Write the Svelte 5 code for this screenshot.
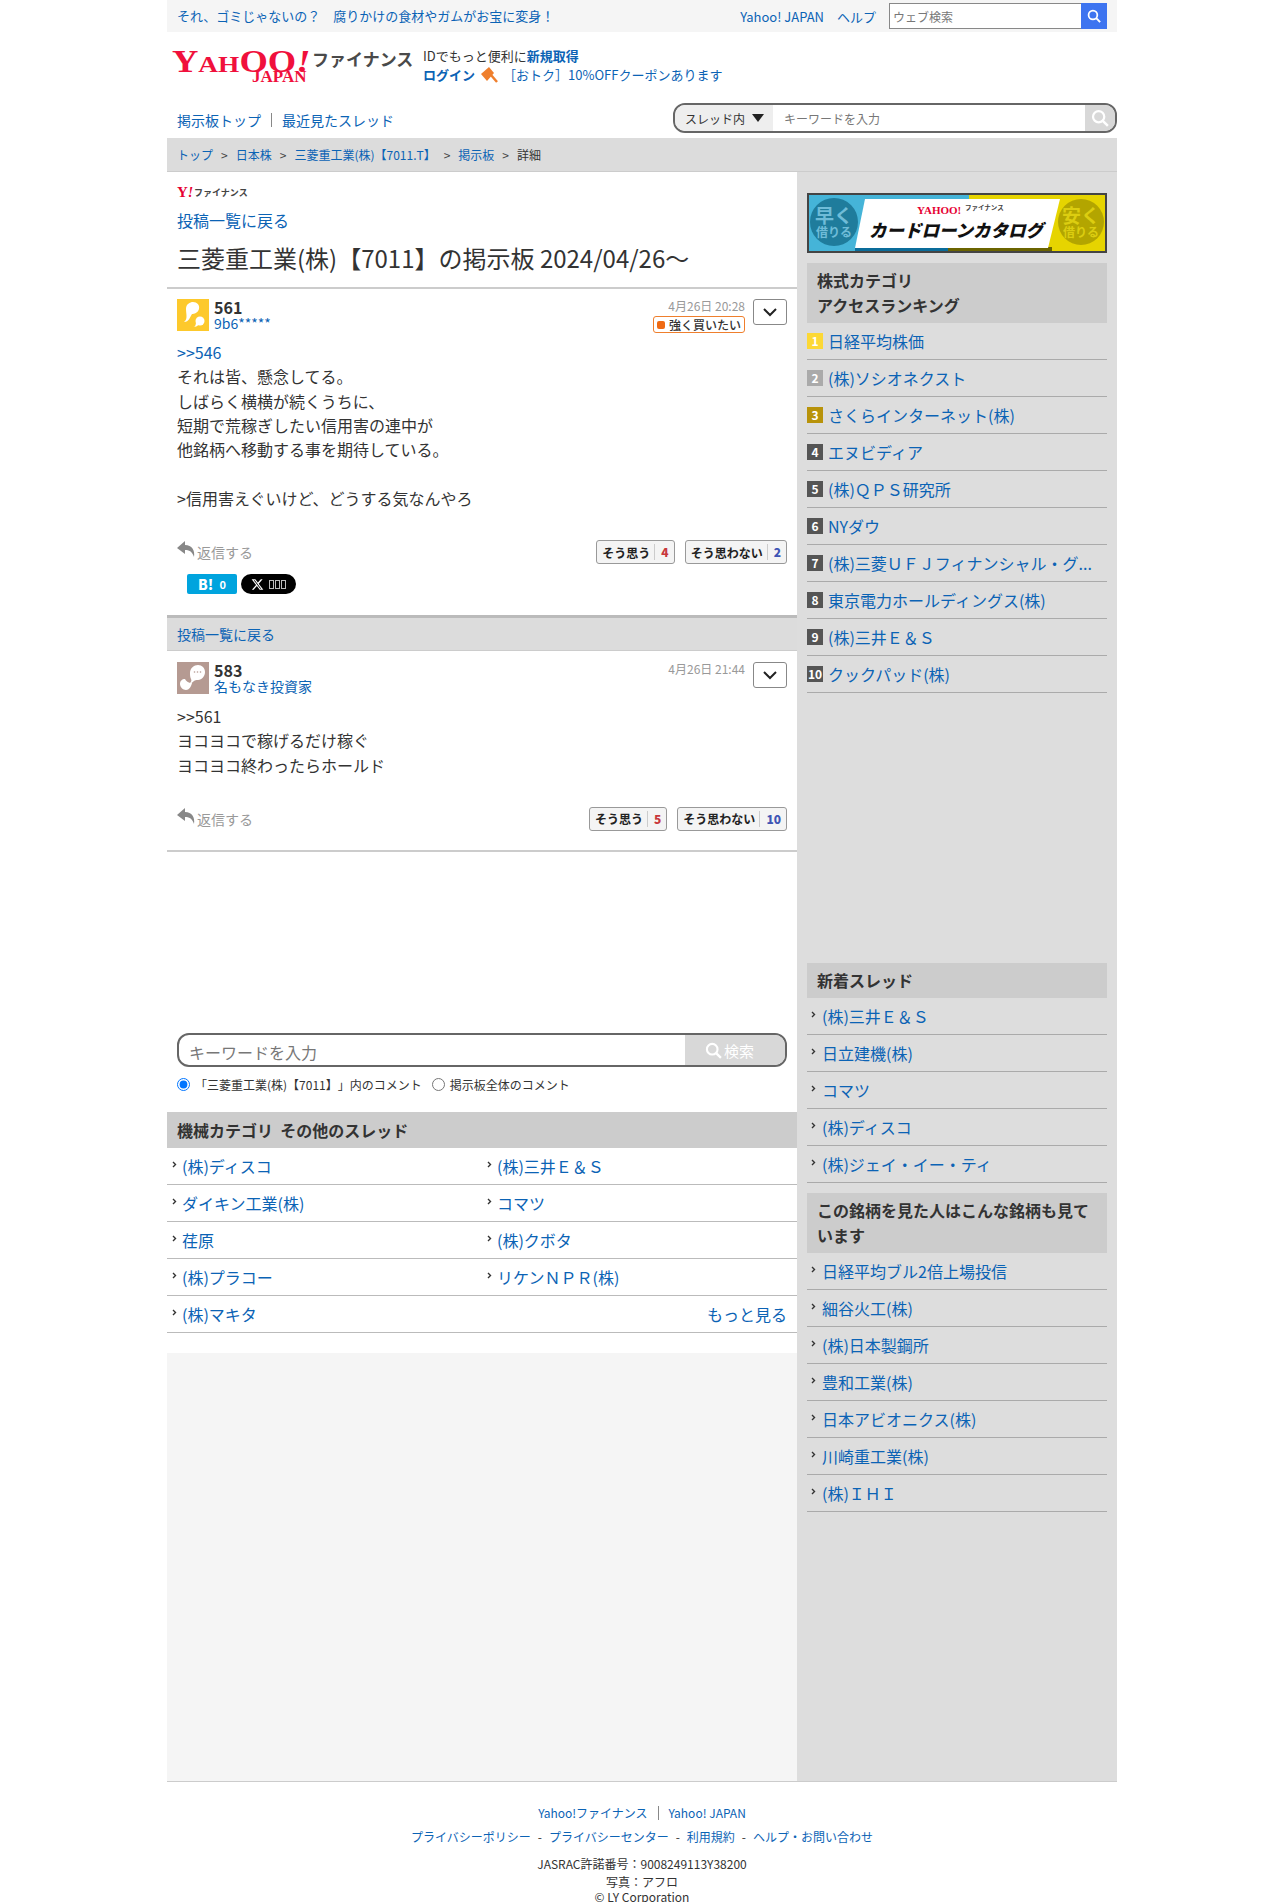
<script lang="ts">
    const ranking = ['日経平均株価', '(株)ソシオネクスト', 'さくらインターネット(株)', 'エヌビディア', '(株)ＱＰＳ研究所', 'NYダウ', '(株)三菱ＵＦＪフィナンシャル・グ...', '東京電力ホールディングス(株)', '(株)三井Ｅ＆Ｓ', 'クックパッド(株)'];
    const newest = ['(株)三井Ｅ＆Ｓ', '日立建機(株)', 'コマツ', '(株)ディスコ', '(株)ジェイ・イー・ティ'];
    const alsoViewed = ['日経平均ブル2倍上場投信', '細谷火工(株)', '(株)日本製鋼所', '豊和工業(株)', '日本アビオニクス(株)', '川崎重工業(株)', '(株)ＩＨＩ'];
    const others = ['(株)ディスコ', '(株)三井Ｅ＆Ｓ', 'ダイキン工業(株)', 'コマツ', '荏原', '(株)クボタ', '(株)プラコー', 'リケンＮＰＲ(株)', '(株)マキタ'];
    const rankClass = (i: number) => (i < 3 ? `r${i + 1}` : '');
</script>

{#snippet chev()}
    <svg class="chev" width="5" height="7" viewBox="0 0 5 7"><path d="M1 1l2.500 2.500L1 6" fill="none" stroke="#333" stroke-width="1.400" /></svg>
{/snippet}

{#snippet reply()}
    <svg width="20" height="20" viewBox="0 0 20 20"><path d="M8 1L0 8l8 6v-4c4 0 7 1 9 7 1-7-2-12-9-12z" fill="#888" /></svg>
{/snippet}

{#snippet searchIcon(color: string, size: number)}
    <svg width={size} height={size} viewBox="0 0 16 16"><circle cx="6.800" cy="6.800" r="5" fill="none" stroke={color} stroke-width="2" /><path d="M10.500 10.500L15 15" stroke={color} stroke-width="2.200" /></svg>
{/snippet}

{#snippet downBtn()}
    <button class="more" aria-label="メニュー"><svg width="14" height="9" viewBox="0 0 14 9"><path d="M1 1l6 6 6-6" fill="none" stroke="#222" stroke-width="2" /></svg></button>
{/snippet}

<div class="page">
    <div class="topbar">
        <a class="promo" href="#a">それ、ゴミじゃないの？　腐りかけの食材やガムがお宝に変身！</a>
        <div class="topright">
            <a href="#a">Yahoo! JAPAN</a>
            <a href="#a">ヘルプ</a>
            <div class="websearch">
                <span>ウェブ検索</span>
                <b>{@render searchIcon('#fff', 14)}</b>
            </div>
        </div>
    </div>

    <header class="head">
        <div class="logo">
            <span class="yahoo"><i>Y</i>AH<i>OO</i><em>!</em></span>
            <span class="japan">JAPAN</span>
            <span class="fin">ファイナンス</span>
        </div>
        <div class="login">
            <div>IDでもっと便利に<a href="#a"><strong>新規取得</strong></a></div>
            <div class="coupon">
                <a href="#a"><strong>ログイン</strong></a>
                <svg width="18" height="18" viewBox="0 0 18 18"><path d="M1 8l8-7 5 6-7 8z" fill="#ef7f2d" /><path d="M11 9l6 7" stroke="#ef7f2d" stroke-width="2.500" /></svg>
                <a href="#a">［おトク］10%OFFクーポンあります</a>
            </div>
        </div>
    </header>

    <div class="nav">
        <div class="navlinks"><a href="#a">掲示板トップ</a><span class="sep"></span><a href="#a">最近見たスレッド</a></div>
        <div class="threadsearch">
            <div class="scope">スレッド内<span class="tri"></span></div>
            <span class="ph">キーワードを入力</span>
            <b>{@render searchIcon('#fff', 18)}</b>
        </div>
    </div>

    <div class="crumbs">
        <a href="#a">トップ</a><span>&gt;</span><a href="#a">日本株</a><span>&gt;</span><a href="#a">三菱重工業(株)【7011.T】</a><span>&gt;</span><a href="#a">掲示板</a><span>&gt;</span><em>詳細</em>
    </div>

    <div class="columns">
        <main class="main">
            <div class="mainhead">
                <div class="minilogo"><span class="y">Y<i>!</i></span><span>ファイナンス</span></div>
                <a class="back" href="#a">投稿一覧に戻る</a>
                <h1>三菱重工業(株)【7011】の掲示板 2024/04/26〜</h1>
            </div>

            <article class="post first">
                <div class="posthead">
                    <svg class="avatar" viewBox="0 0 32 32"><rect width="32" height="32" fill="#fdc92c" /><path d="M7 23c4-3 2-8 2-13 0-5 4-7 7-7 4 0 7 3 6 7-1 4-5 5-7 5-2 3-3 8-8 8z" fill="#fff" /><circle cx="23" cy="22" r="4.500" fill="#fff" /><path d="M19 23c0 3-1 5-3 5 3 0 5-1 6-3z" fill="#fff" /></svg>
                    <div class="who"><strong>561</strong><a href="#a">9b6*****</a></div>
                    <div class="meta"><time>4月26日 20:28</time><span class="badge"><i></i>強く買いたい</span></div>
                    {@render downBtn()}
                </div>
                <div class="body">
                    <a href="#a">&gt;&gt;546</a><br />
                    それは皆、懸念してる。<br />
                    しばらく横横が続くうちに、<br />
                    短期で荒稼ぎしたい信用害の連中が<br />
                    他銘柄へ移動する事を期待している。<br />
                    <br />
                    &gt;信用害えぐいけど、どうする気なんやろ
                </div>
                <div class="actions">
                    <span class="reply">{@render reply()}返信する</span>
                    <div class="votes">
                        <span class="vote">そう思う<b class="red">4</b></span>
                        <span class="vote">そう思わない<b class="blue">2</b></span>
                    </div>
                </div>
                <div class="share">
                    <span class="hatena"><b>B!</b>0</span>
                    <span class="xbtn">
                        <svg width="13" height="13" viewBox="0 0 24 24"><path d="M18.200 2.200h3.300l-7.200 8.300 8.500 11.200h-6.700l-5.200-6.800-6 6.800H1.600l7.700-8.800L1.200 2.200h6.800l4.700 6.200zm-1.200 17.500h1.800L7 4.100H5.100z" fill="#fff" /></svg>
                        <i></i><i></i><i></i>
                    </span>
                </div>
            </article>

            <div class="backbar"><a href="#a">投稿一覧に戻る</a></div>

            <article class="post second">
                <div class="posthead">
                    <svg class="avatar" viewBox="0 0 32 32"><rect width="32" height="32" fill="#b59a92" /><path d="M13 11c0-5 4-8 8-8s7 3 7 7-3 8-7 8c-2 0-3 0-4 1-2 2-4 3-5 3 2-2 3-3 2-5-1-2-1-4-1-6z" fill="#fff" /><path d="M8 17c1 2 3 4 7 4-1 4-3 7-6 7s-6-3-6-6 2-5 5-5z" fill="#fff" /><circle cx="17.500" cy="10" r=".8" fill="#b59a92" /><circle cx="20.500" cy="10" r=".8" fill="#b59a92" /><circle cx="23.500" cy="10" r=".8" fill="#b59a92" /></svg>
                    <div class="who"><strong>583</strong><a href="#a">名もなき投資家</a></div>
                    <div class="meta"><time>4月26日 21:44</time></div>
                    {@render downBtn()}
                </div>
                <div class="body">
                    &gt;&gt;561<br />
                    ヨコヨコで稼げるだけ稼ぐ<br />
                    ヨコヨコ終わったらホールド
                </div>
                <div class="actions">
                    <span class="reply">{@render reply()}返信する</span>
                    <div class="votes">
                        <span class="vote">そう思う<b class="red">5</b></span>
                        <span class="vote">そう思わない<b class="blue">10</b></span>
                    </div>
                </div>
            </article>

            <div class="commentsearch">
                <div class="bigsearch">
                    <span class="ph">キーワードを入力</span>
                    <b>{@render searchIcon('#fff', 17)}検索</b>
                </div>
                <div class="radios">
                    <label><input type="radio" name="scope" checked />「三菱重工業(株)【7011】」内のコメント</label>
                    <label><input type="radio" name="scope" />掲示板全体のコメント</label>
                </div>
            </div>

            <h2 class="mainsec">機械カテゴリ&nbsp;&nbsp;その他のスレッド</h2>
            <ul class="othergrid">
                {#each others as name}
                    <li>{@render chev()}<a href="#a">{name}</a></li>
                {/each}
                <li class="morecell"><a href="#a">もっと見る</a></li>
            </ul>
            <div class="adblock"></div>
        </main>

        <aside class="side">
            <svg class="banner" viewBox="0 0 300 60">
                <rect width="300" height="60" fill="#444" />
                <rect x="2" y="2" width="160" height="56" fill="#45b4d8" />
                <rect x="162" y="2" width="136" height="56" fill="#e6d400" />
                <rect x="48" y="54" width="93" height="4" fill="#0a6c9a" />
                <rect x="141" y="54" width="104" height="4" fill="#6b6400" />
                <circle cx="27" cy="29" r="24" fill="#1f7c9c" />
                <circle cx="274" cy="29" r="23" fill="#b3a500" />
                <polygon points="58,6 253,6 241,55 48,55" fill="#fff" />
                <text x="8" y="30" class="b1 cool">早く</text>
                <text x="9" y="44" class="b2 cool">借りる</text>
                <text x="255" y="30" class="b1 warm">安く</text>
                <text x="256" y="44" class="b2 warm">借りる</text>
                <text x="110" y="21" class="b3">YAHOO!</text>
                <text x="158" y="17" class="b4">ファイナンス</text>
                <text x="62" y="44" class="b5">カードローンカタログ</text>
            </svg>

            <h2 class="sidesec">株式カテゴリ<br />アクセスランキング</h2>
            <ol class="list">
                {#each ranking as name, i}
                    <li class="rank"><span class="num {rankClass(i)}">{i + 1}</span><a href="#a">{name}</a></li>
                {/each}
            </ol>

            <div class="sidead"></div>

            <h2 class="sidesec">新着スレッド</h2>
            <ul class="list">
                {#each newest as name}
                    <li class="plain">{@render chev()}<a href="#a">{name}</a></li>
                {/each}
            </ul>

            <h2 class="sidesec">この銘柄を見た人はこんな銘柄も見ています</h2>
            <ul class="list">
                {#each alsoViewed as name}
                    <li class="plain">{@render chev()}<a href="#a">{name}</a></li>
                {/each}
            </ul>
        </aside>
    </div>

    <footer class="foot">
        <div class="f1"><a href="#a">Yahoo!ファイナンス</a><span class="sep"></span><a href="#a">Yahoo! JAPAN</a></div>
        <div class="f2"><a href="#a">プライバシーポリシー</a><span>-</span><a href="#a">プライバシーセンター</a><span>-</span><a href="#a">利用規約</a><span>-</span><a href="#a">ヘルプ・お問い合わせ</a></div>
        <div class="f3">JASRAC許諾番号：9008249113Y38200</div>
        <div class="f4">写真：アフロ</div>
        <div class="f5">© LY Corporation</div>
    </footer>
</div>

<style>
    :global(body) {
        margin: 0;
        background: #fff;
        font-family: "Noto Sans CJK JP", "Noto Sans", sans-serif;
        color: #333;
    }
    a {
        color: #0b63b5;
        text-decoration: none;
    }
    ul, ol {
        list-style: none;
        margin: 0;
        padding: 0;
    }
    h1, h2 {
        margin: 0;
    }
    .page {
        width: 950px;
        margin-left: 167px;
        height: 1902px;
        overflow: hidden;
    }

    /* top */
    .topbar {
        height: 32px;
        background: #f5f5f5;
        display: flex;
        align-items: center;
        justify-content: space-between;
        padding: 0 10px;
        font-size: 13px;
    }
    .promo {
        margin-top: -2px;
    }
    .topright {
        display: flex;
        align-items: center;
        gap: 13px;
    }
    .websearch {
        width: 218px;
        height: 26px;
        display: flex;
        box-sizing: border-box;
        border: 1px solid #888;
        border-right: 0;
        background: #fff;
        font-size: 12px;
        color: #777;
        align-items: center;
        padding-left: 3px;
        justify-content: space-between;
    }
    .websearch b {
        width: 26px;
        height: 26px;
        background: #3d74f0;
        display: flex;
        align-items: center;
        justify-content: center;
    }

    .head {
        display: flex;
        height: 71px;
        padding: 15px 0 0 5px;
        box-sizing: border-box;
    }
    .logo {
        width: 251px;
        position: relative;
        height: 36px;
        flex: none;
    }
    .yahoo {
        position: absolute;
        left: 0;
        top: -3px;
        font-family: "Liberation Serif", serif;
        font-weight: 700;
        color: #f0103c;
        font-size: 24px;
        line-height: 34px;
        white-space: nowrap;
        transform: scaleX(1.14);
        transform-origin: left;
    }
    .yahoo i {
        font-style: normal;
        font-size: 32px;
    }
    .yahoo em {
        font-size: 32px;
        font-style: italic;
    }
    .japan {
        position: absolute;
        left: 80px;
        top: 23px;
        font-family: "Liberation Serif", serif;
        font-weight: 700;
        font-size: 17px;
        color: #f0103c;
        line-height: 14px;
    }
    .fin {
        position: absolute;
        left: 140px;
        top: -2px;
        font-size: 17px;
        font-weight: 700;
        color: #4a4a4a;
        line-height: 28px;
        white-space: nowrap;
    }
    .login {
        font-size: 13px;
        line-height: 19px;
        margin-top: -1px;
    }
    .coupon {
        display: flex;
        align-items: center;
        gap: 5px;
    }

    .nav {
        display: flex;
        justify-content: space-between;
        height: 35px;
        padding-left: 10px;
        align-items: flex-start;
    }
    .navlinks {
        font-size: 14px;
        display: flex;
        align-items: center;
        padding-top: 7px;
        line-height: 20px;
    }
    .sep {
        display: inline-block;
        width: 1px;
        height: 14px;
        background: #888;
        margin: 0 10px;
    }
    .threadsearch {
        width: 444px;
        height: 30px;
        box-sizing: border-box;
        border: 2px solid #666;
        border-radius: 12px;
        display: flex;
        align-items: center;
        overflow: hidden;
        font-size: 12px;
    }
    .scope {
        width: 98px;
        height: 100%;
        background: #eee;
        display: flex;
        align-items: center;
        padding-left: 10px;
        box-sizing: border-box;
        gap: 7px;
        color: #333;
    }
    .tri {
        border-left: 6px solid transparent;
        border-right: 6px solid transparent;
        border-top: 8px solid #222;
    }
    .threadsearch .ph {
        margin-left: 11px;
        color: #777;
        flex: 1;
    }
    .threadsearch b {
        width: 30px;
        height: 100%;
        background: #d8d8d8;
        display: flex;
        align-items: center;
        justify-content: center;
    }

    .crumbs {
        height: 34px;
        box-sizing: border-box;
        background: #dcdcdc;
        border-bottom: 1px solid #ccc;
        display: flex;
        align-items: center;
        padding-left: 10px;
        font-size: 12px;
    }
    .crumbs span {
        margin: 0 8px;
        color: #444;
    }
    .crumbs em {
        font-style: normal;
        color: #333;
    }

    .columns {
        display: flex;
        height: 1609px;
        border-bottom: 1px solid #ccc;
    }
    .main {
        width: 630px;
        flex: none;
    }
    .side {
        width: 320px;
        flex: none;
        background: #ddd;
        padding: 21px 10px 0;
        box-sizing: border-box;
    }

    .mainhead {
        height: 117px;
        box-sizing: border-box;
        padding: 13px 10px 0;
        border-bottom: 2px solid #ccc;
    }
    .minilogo {
        display: flex;
        align-items: center;
        font-size: 9px;
        height: 14px;
        font-weight: 700;
        color: #444;
        gap: 2px;
    }
    .minilogo .y {
        font-family: "Liberation Serif", serif;
        font-size: 15px;
        color: #e60033;
        width: 15px;
        white-space: nowrap;
    }
    .minilogo .y i {
        font-size: 14px;
    }
    .back {
        display: block;
        font-size: 16px;
        line-height: 24px;
        margin-top: 9px;
    }
    h1 {
        font-size: 24px;
        font-weight: 400;
        line-height: 36px;
        margin-top: 8px;
        color: #333;
        white-space: nowrap;
    }

    .post {
        padding: 10px 10px 0;
        box-sizing: border-box;
    }
    .first {
        height: 326px;
    }
    .second {
        height: 201px;
        padding-top: 11px;
        border-bottom: 2px solid #ccc;
    }
    .second .posthead {
        height: 42px;
    }
    .posthead {
        display: flex;
        align-items: flex-start;
        height: 41px;
    }
    .avatar {
        width: 32px;
        height: 32px;
        flex: none;
    }
    .who {
        display: flex;
        flex-direction: column;
        margin-left: 5px;
        flex: 1;
        line-height: 16px;
    }
    .who strong {
        font-size: 16px;
        color: #333;
    }
    .who a {
        font-size: 14px;
    }
    .meta {
        display: flex;
        flex-direction: column;
        align-items: flex-end;
        margin-right: 8px;
    }
    .meta time {
        font-size: 12px;
        color: #999;
        line-height: 14px;
    }
    .badge {
        margin-top: 3px;
        height: 17px;
        width: 92px;
        box-sizing: border-box;
        border: 1px solid #ef7f2d;
        border-radius: 3px;
        font-size: 12px;
        font-weight: 500;
        line-height: 15px;
        display: flex;
        align-items: center;
        gap: 4px;
        padding-left: 3px;
    }
    .badge i {
        width: 8px;
        height: 8px;
        border-radius: 2px;
        background: #ef6a13;
    }
    .more {
        width: 34px;
        height: 26px;
        background: #fff;
        border: 1px solid #888;
        border-radius: 3px;
        padding: 0;
        display: flex;
        align-items: center;
        justify-content: center;
    }
    .body {
        font-size: 16px;
        line-height: 24.3px;
        color: #333;
    }
    .actions {
        display: flex;
        justify-content: space-between;
        margin-top: 30px;
        height: 34px;
    }
    .reply {
        display: flex;
        align-items: center;
        font-size: 14px;
        color: #999;
        height: 24px;
    }
    .reply svg {
        margin-top: -4px;
    }
    .votes {
        display: flex;
        gap: 10px;
    }
    .vote {
        display: flex;
        align-items: center;
        height: 24px;
        box-sizing: border-box;
        border: 1px solid #999;
        border-radius: 3px;
        background: #f4f4f4;
        padding: 0 5px;
        font-size: 12px;
        font-weight: 700;
        color: #222;
    }
    .vote b {
        margin-left: 4px;
        padding-left: 6px;
        border-left: 1px solid #ccc;
        line-height: 16px;
    }
    .red {
        color: #c8383c;
    }
    .blue {
        color: #3f55b5;
    }
    .share {
        display: flex;
        gap: 4px;
        margin-left: 10px;
    }
    .hatena {
        width: 50px;
        height: 20px;
        background: #00a4de;
        border-radius: 2px;
        color: #fff;
        font-size: 11px;
        font-weight: 700;
        display: flex;
        align-items: center;
        justify-content: center;
        gap: 6px;
    }
    .hatena b {
        font-size: 14px;
    }
    .xbtn {
        width: 55px;
        height: 20px;
        background: #000;
        border-radius: 10px;
        display: flex;
        align-items: center;
        justify-content: center;
        gap: 1px;
    }
    .xbtn svg {
        margin-right: 4px;
    }
    .xbtn i {
        width: 3px;
        height: 7px;
        border: 1px solid #bbb;
    }
    .backbar {
        height: 36px;
        box-sizing: border-box;
        background: #dcdcdc;
        border-top: 3px solid #bbb;
        border-bottom: 1px solid #ccc;
        padding-left: 10px;
        font-size: 14px;
        line-height: 32px;
    }

    .commentsearch {
        padding: 181px 10px 0;
    }
    .bigsearch {
        height: 34px;
        box-sizing: border-box;
        border: 2px solid #666;
        border-radius: 12px;
        display: flex;
        overflow: hidden;
        font-size: 16px;
        align-items: center;
    }
    .bigsearch .ph {
        flex: 1;
        padding: 3px 0 0 10px;
        color: #777;
    }
    .bigsearch b {
        width: 100px;
        height: 100%;
        background: #d8d8d8;
        color: #fff;
        font-weight: 400;
        font-size: 15px;
        display: flex;
        align-items: center;
        padding-left: 20px;
        box-sizing: border-box;
        gap: 2px;
    }
    .radios {
        display: flex;
        gap: 10px;
        margin-top: 7px;
        font-size: 12px;
        height: 20px;
        align-items: center;
        text-spacing-trim: space-all;
    }
    .radios label {
        display: flex;
        align-items: center;
    }
    .radios input {
        width: 13px;
        height: 13px;
        margin: 0 5px 0 0;
    }
    .mainsec {
        margin-top: 18px;
        height: 36px;
        background: #ccc;
        font-size: 16px;
        line-height: 36px;
        font-weight: 700;
        padding-left: 10px;
        color: #333;
    }
    .othergrid {
        display: grid;
        grid-template-columns: 1fr 1fr;
    }
    .othergrid li {
        height: 37px;
        box-sizing: border-box;
        border-bottom: 1px solid #bbb;
        display: flex;
        align-items: center;
        font-size: 16px;
        padding-left: 5px;
    }
    .othergrid .morecell {
        justify-content: flex-end;
        padding-right: 10px;
    }
    .chev {
        margin: -4px 5px 0 0;
        flex: none;
    }
    .adblock {
        margin-top: 20px;
        height: 428px;
        background: #f5f5f5;
    }

    .banner {
        display: block;
        width: 300px;
        height: 60px;
    }
    .b1 {
        font-size: 19px;
        font-weight: 700;
    }
    .b2 {
        font-size: 12px;
        font-weight: 700;
    }
    .cool {
        fill: #6fbcd8;
    }
    .warm {
        fill: #dccd10;
    }
    .b3 {
        font-family: "Liberation Serif", serif;
        font-weight: 700;
        font-size: 11px;
        fill: #e60033;
    }
    .b4 {
        font-size: 6.500px;
        font-weight: 700;
        fill: #444;
    }
    .b5 {
        font-size: 17.500px;
        font-weight: 900;
        font-style: italic;
        fill: #111;
    }
    .sidesec {
        margin-top: 10px;
        background: #ccc;
        font-size: 16px;
        line-height: 25px;
        font-weight: 700;
        padding: 5px 10px;
        color: #333;
    }
    .list li {
        height: 37px;
        box-sizing: border-box;
        border-bottom: 1px solid #aaa;
        display: flex;
        align-items: center;
        font-size: 16px;
        white-space: nowrap;
    }
    .plain {
        padding-left: 4px;
    }
    .plain .chev {
        margin-right: 6px;
    }
    .num {
        width: 16px;
        height: 16px;
        background: #555;
        color: #fff;
        font-size: 12px;
        font-weight: 700;
        line-height: 16px;
        text-align: center;
        margin-right: 5px;
        flex: none;
    }
    .r1 {
        background: #fcd835;
    }
    .r2 {
        background: #aaa;
    }
    .r3 {
        background: #b8930a;
    }
    .sidead {
        height: 260px;
    }

    .foot {
        text-align: center;
        font-size: 12px;
        padding-top: 21px;
    }
    .foot > div {
        white-space: nowrap;
    }
    .f1 {
        line-height: 20px;
        display: flex;
        justify-content: center;
        align-items: center;
    }
    .f2 {
        line-height: 20px;
        margin-top: 4px;
        display: flex;
        justify-content: center;
        gap: 7px;
    }
    .f3 {
        margin-top: 7px;
        line-height: 20px;
    }
    .f4 {
        line-height: 16px;
    }
    .f5 {
        line-height: 14px;
    }
</style>
